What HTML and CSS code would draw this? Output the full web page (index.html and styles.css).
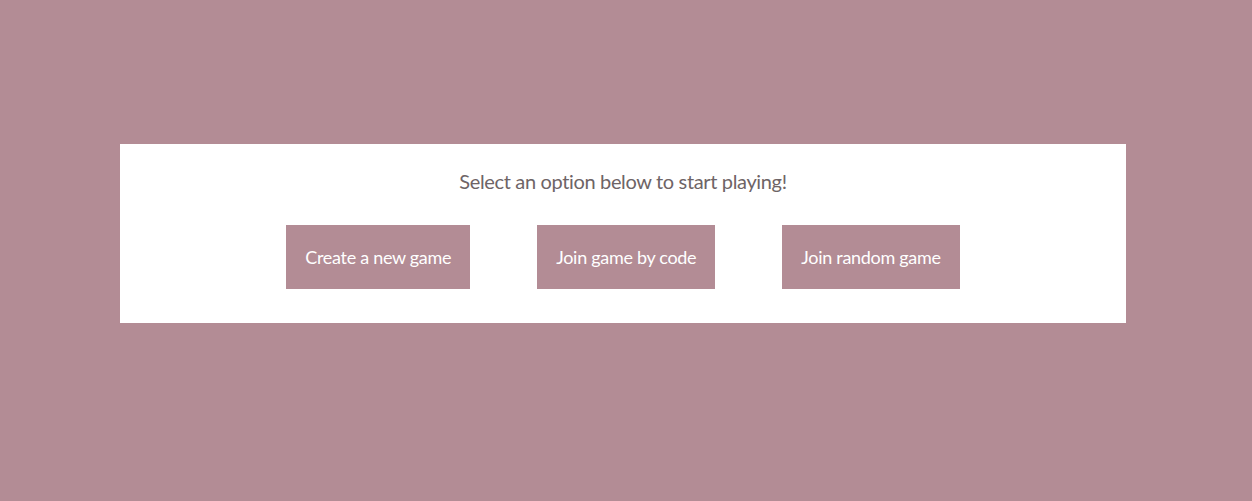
FILE: index.html
```html
<!DOCTYPE html>
<html>
<head>
<meta charset="utf-8">
<link rel="stylesheet" href="styles.css">
</head>
<body>
<div class="panel">
  <p class="prompt">Select an option below to start playing!</p>
  <div class="actions">
    <button class="btn">Create a new game</button>
    <button class="btn">Join game by code</button>
    <button class="btn">Join random game</button>
  </div>
</div>
</body>
</html>
```
FILE: styles.css
```css
html, body {
  margin: 0;
  padding: 0;
  background: #b38c95;
}
body {
  font-family: "Lato", "DejaVu Sans", sans-serif;
  padding-top: 144px;
}
.panel {
  background: #ffffff;
  width: 1006px;
  height: 179px;
  margin-left: 120px;
  box-sizing: border-box;
  padding-top: 24px;
}
.prompt {
  margin: 0;
  text-align: center;
  color: #6e6466;
  font-size: 20px;
  letter-spacing: -0.35px;
  line-height: 26px;
}
.actions {
  display: flex;
  justify-content: center;
  gap: 67px;
  margin-top: 31px;
}
.btn {
  background: #b38c95;
  color: #ffffff;
  border: none;
  font-family: inherit;
  font-size: 18px;
  letter-spacing: -0.3px;
  height: 64px;
  padding: 0 19px;
  cursor: pointer;
}
```
